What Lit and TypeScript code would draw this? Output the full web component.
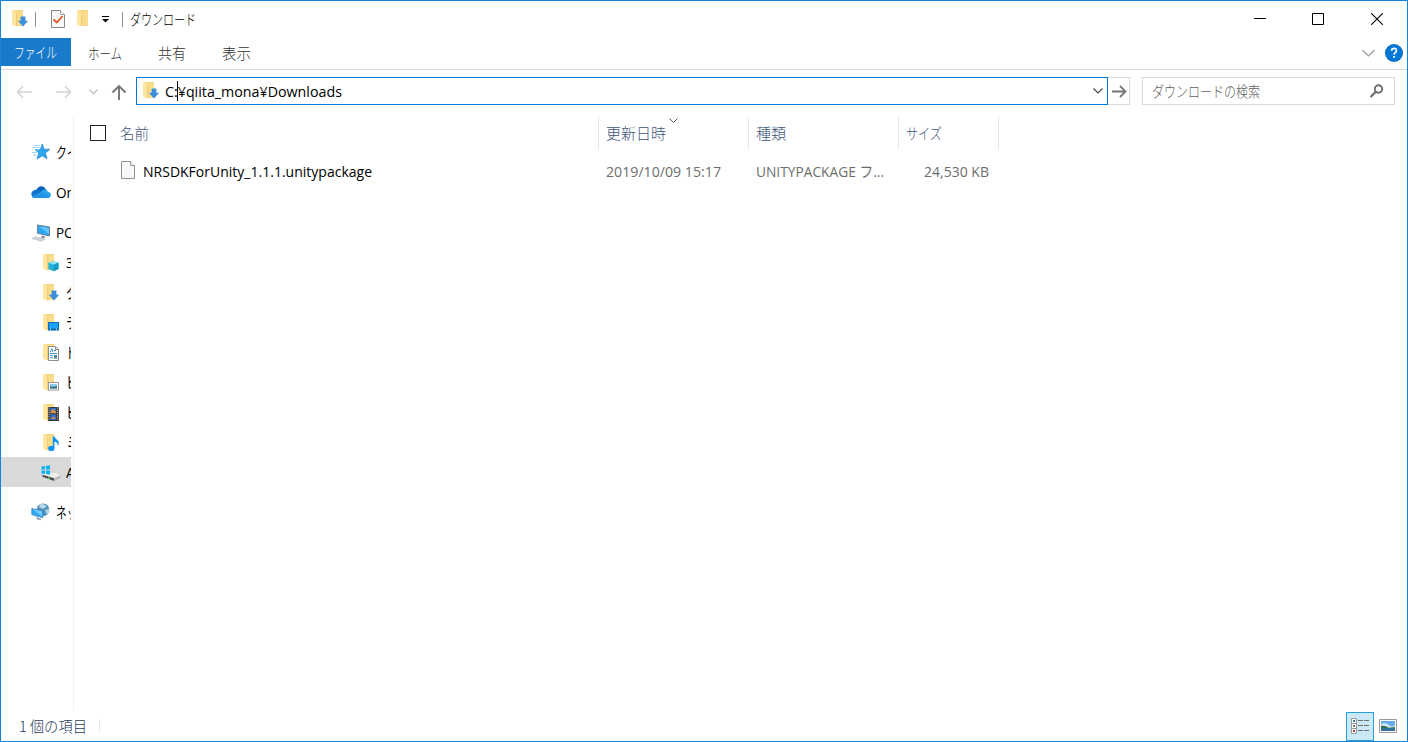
import { LitElement, html, css, svg, nothing } from "lit";
import { customElement, property } from "lit/decorators.js";

/** One-line label whose glyphs are condensed or stretched to a given width. */
@customElement("fit-text")
class FitText extends LitElement {
  @property({ type: Number }) w = 0;
  @property() text = "";
  static styles = css`
    :host { display: block; flex: none; white-space: pre; overflow: visible; }
    .t { display: inline-block; transform-origin: 0 50%; }
  `;
  updated() {
    const t = this.renderRoot.querySelector(".t") as HTMLElement;
    if (t && t.offsetWidth) t.style.transform = `scaleX(${this.w / t.getBoundingClientRect().width})`;
  }
  firstUpdated() { this.style.width = `${this.w}px`; }
  render() { return html`<span class="t">${this.text}</span>`; }
}

const folder = svg`
  <path d="M1 0h10v13.500L5 16z" fill="#f5d67f"/>
  <path d="M5 1.500L11 1v15H5z" fill="#f9dd8c"/>
  <path d="M0 0h1.500L5 2.500V16.600L0 15z" fill="#ffe6a0"/>
  <path d="M4.700 3v13" stroke="#e6bf62" stroke-width=".8"/>`;

const overlays: Record<string, unknown> = {
  down: svg`<path d="M8.600 6.500h4.800v4.300h2.800L11 16.400 5.800 10.800h2.800z" fill="#3b8edb"/>`,
  cube: svg`<path d="M5.300 8.800l5.200-1.600 5 1.600v6.300l-5 2.200-5.200-2.200z" fill="#27b1d6"/>
    <path d="M5.300 8.800l5.200-1.600 5 1.600-5 2z" fill="#8fe3f2"/><path d="M10.500 10.800l5-2v6.300l-5 2.200z" fill="#149dc6"/>`,
  desk: svg`<rect x="5.500" y="8.500" width="10" height="7.500" fill="#1ba1f8" stroke="#0b6db4"/>
    <path d="M6 15.200h9" stroke="#0a4f86"/><path d="M7 15.200h1M13 15.200h1" stroke="#fff"/>`,
  doc: svg`<path d="M5.500 2.500h7l3 3v11h-10z" fill="#fff" stroke="#8c8c8c"/><path d="M12.500 2.500v3h3" fill="none" stroke="#8c8c8c"/>
    <path d="M7.200 8l1.600-3.400L10 8M11 6.500h2M7 9.500h7M7 11.700h3M7 13.800h3" stroke="#3a93c9" fill="none"/><path d="M11 11h3v3.600h-3z" fill="#4c8a93"/>`,
  pic: svg`<rect x="5.500" y="8.500" width="10" height="7.500" fill="#fff" stroke="#9a9a9a"/><path d="M7 10h7v4.500H7z" fill="#8cc8ef"/><path d="M7 12.400l3 .4 4-.6v2.300H7z" fill="#316f76"/>`,
  film: svg`<path d="M5 3h11v14H5z" fill="#383838"/><path d="M7.500 4h5.600v5.300H7.500z" fill="#2d6fd0"/><path d="M7.500 10.500h5.600V16H7.500z" fill="#356bc4"/>
    <path d="M7.500 7l3-2 2.600 3.200v1.100H7.500zM7.500 15l2.600-2.600 3 2z" fill="#df8e3a"/>
    <path d="M6.100 3.500v13M14.700 3.500v13" stroke="#e4e4e4" stroke-dasharray="1 1.200"/>`,
  note: svg`<ellipse cx="8.300" cy="14.400" rx="3.100" ry="2.600" fill="#0a93f5"/><path d="M9.800 14.500V2.200h1.500c.4 2.700 4.600 3.500 4.500 6.700 0 1.300-.4 2.400-1.100 3.100.6-3-1.500-4-3.300-4.200v6.600z" fill="#0a93f5"/>`,
};

const folderIcon = (kind = "") => html`<svg width="17" height="18" viewBox="0 0 17 18">${folder}${kind ? overlays[kind] : nothing}</svg>`;

const icons: Record<string, unknown> = {
  star: html`<svg width="20" height="18" viewBox="0 0 20 18"><path d="M11.300 1l1.700 5.200 5.800.1-4.400 3.700 1.700 5.800-4.900-3-5.200 3.200 1.800-5.900L4 6.700l5.400-.3z" fill="#2fa5ee" stroke="#1586d0" stroke-width=".7"/><path d="M3 2.500h6M1.500 4.500h7M1 9.500h4.500M2 12h3.500M4 6.800h4" stroke="#8fcdf4" stroke-width=".9"/></svg>`,
  cloud: html`<svg width="20" height="14" viewBox="0 0 20 14"><path d="M5.500 5C6.600 1 12.800-.8 15 5l-5 4z" fill="#0a61b8"/><path d="M4 12.900C-.8 12.500-1.200 5.200 5 4.700c2.500-.6 5 1 6 2.300L5 13z" fill="#1173cc"/><path d="M10 7c2-3.600 6.400-2.800 6.600-.3 4.200.2 4.500 6 0 6.300H4c-1.600 0-2.500-.8-3-1.500z" fill="#2ba4ec"/><path d="M1 11.400L10 7l8.800 4.400c-.5 1-1.400 1.600-2.600 1.600H4c-1.400 0-2.400-.7-3-1.600z" fill="#2394e4"/></svg>`,
  pc: html`<svg width="20" height="18" viewBox="0 0 20 18"><path d="M6.500 1l12 2v9l-12-2.800z" fill="#2aa5f3" stroke="#6f7f8b"/><path d="M7.500 2.200L18 10V4z" fill="#63c2fa"/><path d="M11 11.500l3 .7-.4 2.200-4-.9z" fill="#8a939a"/><path d="M1 14.500l3.600-1.800 9.400 2.500-3.300 2.100z" fill="#d2d6d9" stroke="#a9afb3" stroke-width=".5"/></svg>`,
  drive: html`<svg width="20" height="17" viewBox="0 0 20 17"><path d="M1 9.500l3.500-1.200H15l4.500 2.200-6.300 2.800z" fill="#ededed"/><path d="M1.500 9.700l11.700 3.600v2.800L1.500 11.800z" fill="#4a4a4a"/><path d="M13.200 13.200l6.300-2.700v2.700l-6.300 2.900z" fill="#b9b9b9"/><path d="M7 12.800l1.800.6" stroke="#4ee55d" stroke-width="1.300"/><path d="M.5 1.600L4 1v3.500H.5zM5 .9L9 .2v4.300H5zM.5 5.400H4V9L.5 8.400zM5 5.400h4v4.300L5 9z" fill="#08b4f0"/></svg>`,
  net: html`<svg width="20" height="18" viewBox="0 0 20 18"><circle cx="12" cy="6.800" r="6.300" fill="#4f92bd"/><path d="M9 1.500c3-1.500 6 .5 6.300 2.300L12 6 8 4zM14 7l4-1c.3 2-.5 4-2 5.200z" fill="#b7d9ea"/><path d="M.8 5.600l11 2.200v7L.8 11.600z" fill="#2ba7f4" stroke="#4983ae" stroke-width=".8"/><path d="M1.300 6.200L11 13.500V8.200z" fill="#6dcbfb"/><path d="M5 14l4 1.200 2 2-5-.8z" fill="#8fa3af"/></svg>`,
};

const nav = [
  { k: "star", t: "クイ", c: "top kana" },
  { k: "cloud", t: "On", c: "top gap" },
  { k: "pc", t: "PC", c: "top gap low" },
  { f: "cube", t: "3D", c: "sub low" },
  { f: "down", t: "ダ", c: "sub low" },
  { f: "desk", t: "デ", c: "sub low" },
  { f: "doc", t: "ド", c: "sub low kana" },
  { f: "pic", t: "ピ", c: "sub low" },
  { f: "film", t: "ビ", c: "sub low" },
  { f: "note", t: "ミ", c: "sub low" },
  { k: "drive", t: "A", c: "drive low sel" },
  { k: "net", t: "ネッ", c: "top gap kana" },
];

@customElement("app-root")
class AppRoot extends LitElement {
  static styles = css`
    :host { display: block; font: 15px/20px "Open Sans", "Noto Sans CJK JP", sans-serif; color: #000; }
    * { box-sizing: border-box; }
    svg { display: block; flex: none; }
    .win { width: 1408px; height: 742px; border: 1px solid #1883d7; background: #fff; display: flex; flex-direction: column; overflow: hidden; }
    .row { display: flex; align-items: center; }
    .jp { font-family: "Noto Sans CJK JP", sans-serif; font-weight: 300; }
    .title { height: 35px; margin-bottom: 2px; padding-left: 11px; }
    .bar { width: 1px; height: 15px; background: #8f8f8f; margin-top: 2px; }
    .b1 { margin-right: 14px; margin-left: 6px; }
    .check { margin: 1px 11px 0 0; }
    .caret { margin: 3px 10px 0 10px; }
    .b2 { margin-right: 7px; }
    .grow { flex: 1; }
    .winbtns { gap: 46px; padding-right: 24px; }
    .close { margin-left: 1px; }
    .tabs { height: 32px; border-bottom: 1px solid #dadbdc; align-items: flex-start; color: #333; }
    .file { width: 70px; height: 28px; background: #1979ca; color: #fff; display: flex; align-items: center; padding-left: 13px; }
    .tab { height: 30px; display: flex; align-items: center; }
    .tab1 { margin-left: 17px; } .tab2 { margin-left: 36px; } .tab3 { margin-left: 36px; }
    .helpers { height: 30px; gap: 10px; padding-right: 4px; }
    .addr { height: 47px; padding: 7px 12px 0 15px; align-items: flex-start; }
    .arrows { height: 29px; width: 120px; padding-top: 1px; }
    .a2 { margin-left: 24px; } .a3 { margin-left: 17px; } .a4 { margin-left: 13px; }
    .box { width: 973px; height: 28px; border: 1px solid #0078d7; padding: 0 4px 0 6px; }
    .path { margin-left: 5px; position: relative; }
    .cursor { position: absolute; left: 12px; top: 0; width: 1px; height: 20px; background: #000; }
    .go { width: 22px; height: 28px; border: 1px solid #d9d9d9; border-left: 0; justify-content: center; padding: 1px 0 0 2px; }
    .search { width: 253px; height: 28px; margin-left: 12px; border: 1px solid #d9d9d9; padding: 0 10px 0 9px; color: #606060; }
    .main { height: 594px; display: flex; }
    .nav { width: 70px; padding-top: 20px; overflow: hidden; }
    .split { width: 1px; margin: 0 0 0 2px; background: #f1f1f1; }
    .item { height: 30px; white-space: nowrap; }
    .gap { margin-top: 10px; }
    .low svg { margin-top: 2px; }
    .top { padding-left: 30px; } .top .lbl { margin-left: 5px; }
    .sub { padding-left: 42px; } .sub .lbl { margin-left: 6px; }
    .drive { padding-left: 40px; } .drive .lbl { margin-left: 5px; }
    .sel { background: #d9d9d9; }
    .lbl { display: inline-block; transform: scaleX(.9); transform-origin: 0 50%; }
    .kana .lbl { transform: scaleX(.72); }
    .list { flex: 1; }
    .head { height: 32px; display: grid; grid-template-columns: 525px 150px 150px 100px; color: #40547a; }
    .col { border-right: 1px solid #e5e5e5; display: flex; align-items: center; padding-left: 7px; position: relative; height: 32px; }
    .c0 { padding-left: 16px; } .cb { width: 16px; height: 16px; border: 1px solid #222; margin-right: 14px; }
    .sort { position: absolute; left: 70px; top: 1px; }
    .frow { display: grid; grid-template-columns: 525px 150px 150px 100px; height: 30px; margin-top: 7px; color: #6d6d6d; }
    .cell { display: flex; align-items: center; padding-left: 7px; }
    .name { padding-left: 46px; color: #000; gap: 7px; }
    .name svg { margin-top: -2px; }
    .size { justify-content: flex-end; padding: 0 10px 0 0; }
    .status { height: 29px; padding-left: 18px; color: #1e395b; }
    .sbar { width: 1px; height: 13px; background: #e8e8e8; margin-left: 12px; }
    .view { width: 28px; height: 29px; margin-top: 2px; border: 1px solid #26a0da; background: #cbe8f6; justify-content: center; padding-left: 1px; margin-right: 5px; }
    .thumb { margin-right: 10px; }
  `;
  render() {
    return html`<div class="win">
      <div class="row title">
        ${folderIcon("down")}
        <div class="bar b1"></div>
        <svg class="check" width="16" height="18" viewBox="0 0 16 18"><path d="M1.500.5h9l4 4v13h-13z" fill="#f7f8fa" stroke="#858585"/><path d="M10.500.5v4h4" fill="#fff" stroke="#a5a5a5"/><path d="M3.500 9.300l3.200 3.200 6-6.500" fill="none" stroke="#e8531f" stroke-width="1.800"/></svg>
        <svg width="12" height="18" viewBox="0 0 12 18">${folder}</svg>
        <svg class="caret" width="13" height="8" viewBox="0 0 13 8"><path d="M3 .5h7" stroke="#000"/><path d="M3 3h7L6.500 6.500z"/></svg>
        <div class="bar b2"></div>
        <fit-text class="jp" .w=${66} text="ダウンロード"></fit-text>
        <div class="grow"></div>
        <div class="row winbtns">
          <svg width="12" height="12"><path d="M0 5.500h12" stroke="#000"/></svg>
          <svg width="12" height="12"><path d="M.5.500h11v11H.5z" fill="none" stroke="#000"/></svg>
          <svg class="close" width="12" height="12"><path d="M.2.200l11.600 11.600M11.800.2L.2 11.800" stroke="#000" stroke-width="1.100"/></svg>
        </div>
      </div>
      <div class="row tabs">
        <div class="file"><fit-text class="jp" .w=${43} text="ファイル"></fit-text></div>
        <div class="tab tab1"><fit-text class="jp" .w=${34} text="ホーム"></fit-text></div>
        <div class="tab tab2"><fit-text class="jp" .w=${28} text="共有"></fit-text></div>
        <div class="tab tab3"><fit-text class="jp" .w=${29} text="表示"></fit-text></div>
        <div class="grow"></div>
        <div class="row helpers">
          <svg width="13" height="8"><path d="M.5 1l6 6 6-6" fill="none" stroke="#999" stroke-width="1.200"/></svg>
          <svg width="18" height="18" viewBox="0 0 18 18"><circle cx="9" cy="9" r="9" fill="#0567bd"/><circle cx="9" cy="9" r="8" fill="#0078d7"/><path d="M6.500 6.700C6.700 3.600 11.600 3.700 11.500 6.600 11.400 8.500 9 8.600 9 10.700" fill="none" stroke="#fff" stroke-width="1.600"/><path d="M8.100 12h1.800v1.800H8.100z" fill="#fff"/></svg>
        </div>
      </div>
      <div class="row addr">
        <div class="row arrows">
          <svg width="16" height="14"><path d="M16 7H1.500M7 1.500L1.500 7 7 12.500" fill="none" stroke="#d4d4d4" stroke-width="1.500"/></svg>
          <svg class="a2" width="16" height="14"><path d="M0 7h14.500M9 1.500L14.500 7 9 12.500" fill="none" stroke="#d4d4d4" stroke-width="1.500"/></svg>
          <svg class="a3" width="9" height="6"><path d="M.5.700l4 4 4-4" fill="none" stroke="#c4c4c4" stroke-width="1.500"/></svg>
          <svg class="a4" width="16" height="16"><path d="M8 16V2M1.500 8.500L8 2l6.500 6.500" fill="none" stroke="#757575" stroke-width="1.900"/></svg>
        </div>
        <div class="row box">
          ${folderIcon("down")}
          <div class="path"><fit-text .w=${177} text="C:¥qiita_mona¥Downloads"></fit-text><div class="cursor"></div></div>
          <div class="grow"></div>
          <svg width="10" height="6"><path d="M.5.500l4.500 4.500L9.500.500" fill="none" stroke="#444" stroke-width="1.100"/></svg>
        </div>
        <div class="row go"><svg width="15" height="13"><path d="M0 6.500h13M8 1l5.500 5.500L8 12" fill="none" stroke="#777" stroke-width="1.800"/></svg></div>
        <div class="row search">
          <fit-text class="jp" .w=${108} text="ダウンロードの検索"></fit-text>
          <div class="grow"></div>
          <svg width="15" height="14" viewBox="0 0 15 14"><circle cx="9.500" cy="5" r="3.700" fill="none" stroke="#6b6b6b" stroke-width="1.900"/><path d="M6.800 7.700L1.500 13" stroke="#6b6b6b" stroke-width="2.200"/></svg>
        </div>
      </div>
      <div class="main">
        <div class="nav">${nav.map((n) => html`<div class="row item ${n.c}">${n.f ? folderIcon(n.f) : icons[n.k!]}<span class="lbl">${n.t}</span></div>`)}</div>
        <div class="split"></div>
        <div class="list">
          <div class="head">
            <div class="col c0"><div class="cb"></div><fit-text class="jp" .w=${29} text="名前"></fit-text></div>
            <div class="col"><fit-text class="jp" .w=${60} text="更新日時"></fit-text><svg class="sort" width="9" height="6"><path d="M.5.500l4 4 4-4" fill="none" stroke="#555"/></svg></div>
            <div class="col"><fit-text class="jp" .w=${30} text="種類"></fit-text></div>
            <div class="col"><fit-text class="jp" .w=${36} text="サイズ"></fit-text></div>
          </div>
          <div class="frow">
            <div class="cell name"><svg width="16" height="19" viewBox="0 0 16 19"><path d="M1.500.500h9l4 4v13h-13z" fill="#f7f8fa" stroke="#929292"/><path d="M10.500.500v4h4" fill="#fff" stroke="#929292"/></svg><fit-text .w=${229} text="NRSDKForUnity_1.1.1.unitypackage"></fit-text></div>
            <div class="cell"><fit-text .w=${115} text="2019/10/09 15:17"></fit-text></div>
            <div class="cell"><fit-text .w=${128} text="UNITYPACKAGE フ..."></fit-text></div>
            <div class="cell size"><fit-text .w=${65} text="24,530 KB"></fit-text></div>
          </div>
        </div>
      </div>
      <div class="row status">
        <fit-text class="jp" .w=${68} text="1 個の項目"></fit-text>
        <div class="sbar"></div>
        <div class="grow"></div>
        <div class="row view"><svg width="19" height="17" viewBox="0 0 19 17"><path d="M.5.500h5v5h-5zM.5 5.500h5v5h-5zM.5 10.500h5v5h-5z" fill="#fff" stroke="#999"/><path d="M2 2h2v2H2z" fill="#3c8292"/><path d="M2 7h2v2H2z" fill="#777"/><path d="M2 12h2v2H2z" fill="#cc3b23"/><path d="M7 2.500h5M13 2.500h5M7 7.500h5M13 7.500h5M7 12.500h5M13 12.500h5" stroke="#707070"/></svg></div>
        <svg class="thumb" width="18" height="14"><path d="M.5.500h17v13H.5z" fill="#fff" stroke="#999"/><path d="M2 2h14v10H2z" fill="#63aee8"/><path d="M2 5q5-2 8 1t6 0v3H2z" fill="#d4ebf5"/><path d="M2 6.500l4 .5 4 1.800 6-.8v1.800H2z" fill="#376f55"/><path d="M2 9.500h14V12H2z" fill="#2c6fa0"/></svg>
      </div>
    </div>`;
  }
}
